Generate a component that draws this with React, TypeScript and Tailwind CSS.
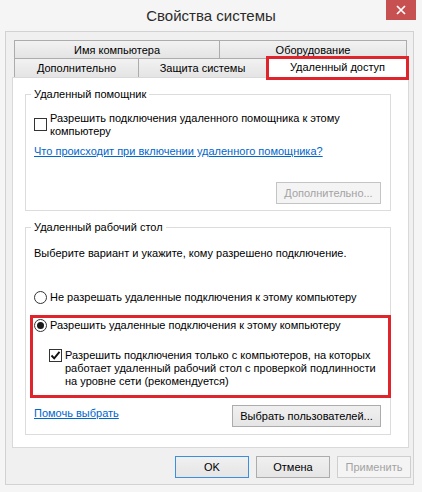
const tabBase =
  "flex items-center justify-center border border-[#acacac] bg-linear-to-b from-[#f2f2f2] to-[#e4e4e4] leading-[13px]";

function CheckBox({ checked }: { checked?: boolean }) {
  return (
    <span className="w-[13px] h-[13px] shrink-0 border border-[#333333] bg-white flex items-center justify-center">
      {checked && (
        <svg width="11" height="11" viewBox="0 0 11 11">
          <path d="M1.5 5.5 L4.2 8.3 L9.5 1.8" fill="none" stroke="#111" strokeWidth="1.9" />
        </svg>
      )}
    </span>
  );
}

function Radio({ checked }: { checked?: boolean }) {
  return (
    <span className="w-[13px] h-[13px] shrink-0 rounded-full border border-[#333333] bg-white flex items-center justify-center">
      {checked && <span className="w-[7px] h-[7px] rounded-full bg-[#1a1a1a]" />}
    </span>
  );
}

function GroupLabel({ children }: { children: React.ReactNode }) {
  return (
    <span className="-mt-[8px] ml-[5px] px-[3px] bg-white leading-[15px] w-fit">{children}</span>
  );
}

export default function App() {
  return (
    <div className="w-[422px] h-[492px] bg-[#f5f5f5] flex flex-col text-[11px] text-black font-['Liberation_Sans',Arial,sans-serif]">
      {/* Title bar */}
      <div className="h-[31px] flex items-start shrink-0">
        <div className="w-[36px]" />
        <div className="flex-1 text-center pt-[6px] text-[15px] leading-[20px] text-[#2b2b2b]">Свойства системы</div>
        <div className="w-[30px] h-[20px] mr-[6px] bg-[#c75050] flex items-center justify-center">
          <svg width="10" height="10" viewBox="0 0 10 10">
            <path d="M1 1 L9 9 M9 1 L1 9" stroke="#fff" strokeWidth="1.7" />
          </svg>
        </div>
      </div>

      {/* Client area */}
      <div className="ml-[5px] w-[409px] h-[454px] border border-[#d2d2d2] bg-[#f0f0f0] flex flex-col">
        {/* Tabs */}
        <div className="mt-[8px] ml-[8px] flex h-[18px]">
          <div className={`${tabBase} w-[206px] border-b-0 pt-[2px]`}>Имя компьютера</div>
          <div className={`${tabBase} w-[188px] -ml-px border-b-0 pt-[2px]`}>Оборудование</div>
        </div>
        <div className="ml-[8px] flex items-end h-[19px]">
          <div className={`${tabBase} w-[125px] h-[19px] border-b-0`}>Дополнительно</div>
          <div className={`${tabBase} w-[129px] h-[19px] -ml-px border-b-0`}>Защита системы</div>
          <div className="relative z-10 w-[143px] h-[24px] -mb-[3px] -ml-px border-[3px] border-[#e0242b] bg-white flex items-center justify-center leading-[13px] pb-[2px]">
            Удаленный доступ
          </div>
        </div>

        {/* Panel */}
        <div className="ml-[6px] w-[397px] h-[371px] shrink-0 border border-[#d9d9d9] bg-white flex flex-col">
          {/* Remote assistance */}
          <div className="mt-[16px] ml-[12px] w-[366px] h-[117px] shrink-0 border border-[#dcdcdc] flex flex-col">
            <GroupLabel>Удаленный помощник</GroupLabel>
            <div className="mt-[10px] ml-[8px] flex gap-[3px]">
              <span className="mt-[6px]"><CheckBox /></span>
              <span className="leading-[13px] whitespace-nowrap">
                Разрешить подключения удаленного помощника к этому
                <br />
                компьютеру
              </span>
            </div>
            <a className="mt-[7px] ml-[8px] leading-[13px] text-[#0066cc] underline w-fit whitespace-nowrap">
              Что происходит при включении удаленного помощника?
            </a>
            <div className="mt-[24px] mr-[9px] self-end w-[105px] h-[22px] border border-[#c4c4c4] bg-[#f4f4f4] text-[#a3a3a3] flex items-center justify-center">
              Дополнительно...
            </div>
          </div>

          {/* Remote desktop */}
          <div className="mt-[16px] ml-[12px] w-[366px] h-[208px] shrink-0 border border-[#dcdcdc] flex flex-col">
            <GroupLabel>Удаленный рабочий стол</GroupLabel>
            <div className="mt-[12px] ml-[8px] leading-[13px] whitespace-nowrap">
              Выберите вариант и укажите, кому разрешено подключение.
            </div>
            <div className="mt-[31px] ml-[8px] flex items-center gap-[3px] leading-[13px] whitespace-nowrap">
              <Radio />
              Не разрешать удаленные подключения к этому компьютеру
            </div>
            <div className="mt-[11px] ml-[4px] w-[361px] h-[83px] shrink-0 border-[3px] border-[#e0242b] flex flex-col">
              <div className="mt-[1px] ml-[1px] flex items-center gap-[3px] leading-[13px] whitespace-nowrap">
                <Radio checked />
                Разрешить удаленные подключения к этому компьютеру
              </div>
              <div className="mt-[17px] ml-[16px] flex gap-[3px]">
                <CheckBox checked />
                <span className="leading-[13px] whitespace-nowrap">
                  Разрешить подключения только с компьютеров, на которых
                  <br />
                  работает удаленный рабочий стол с проверкой подлинности
                  <br />
                  на уровне сети (рекомендуется)
                </span>
              </div>
            </div>
            <div className="mt-[7px] ml-[8px] mr-[9px] flex justify-between items-start">
              <a className="mt-[2px] leading-[13px] text-[#0066cc] underline">Помочь выбрать</a>
              <div className="w-[149px] h-[22px] border border-[#acacac] bg-linear-to-b from-[#f0f0f0] to-[#e5e5e5] flex items-center justify-center">
                Выбрать пользователей...
              </div>
            </div>
          </div>
        </div>

        {/* Dialog buttons */}
        <div className="mt-[8px] mr-[2px] flex justify-end gap-[7px]">
          <div className="w-[74px] h-[22px] border border-[#3c8fdc] bg-linear-to-b from-[#f0f0f0] to-[#e5e5e5] flex items-center justify-center">
            OK
          </div>
          <div className="w-[74px] h-[22px] border border-[#acacac] bg-linear-to-b from-[#f0f0f0] to-[#e5e5e5] flex items-center justify-center">
            Отмена
          </div>
          <div className="w-[74px] h-[22px] border border-[#cfcfcf] bg-[#f4f4f4] text-[#a3a3a3] flex items-center justify-center">
            Применить
          </div>
        </div>
      </div>
    </div>
  );
}
